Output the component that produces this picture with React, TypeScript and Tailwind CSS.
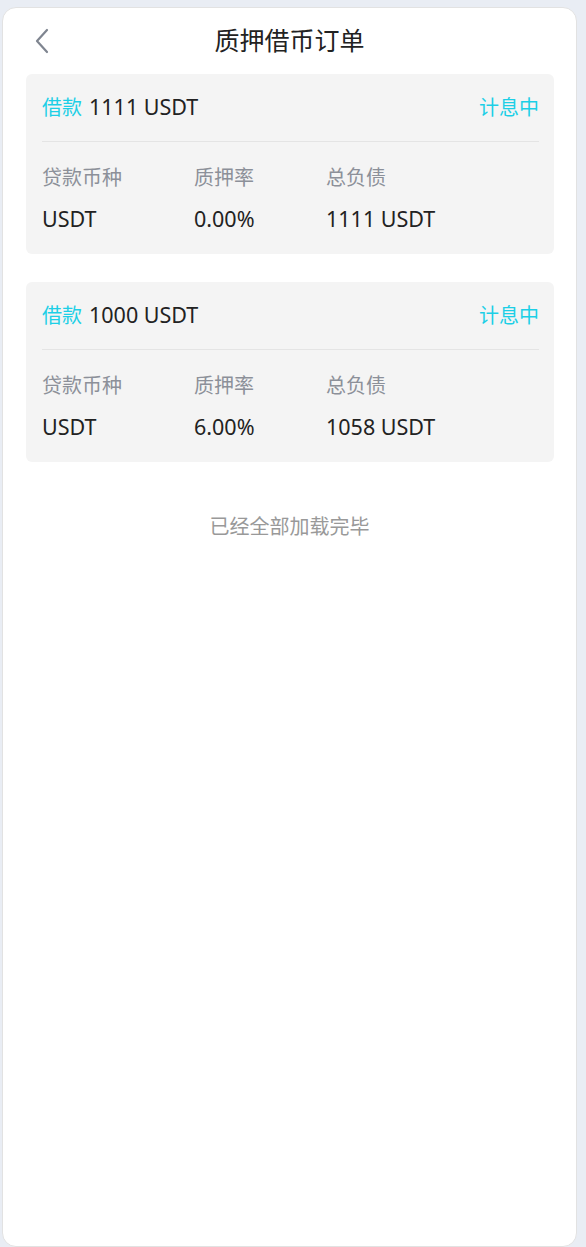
import React from "react";

type Order = {
  amount: string;
  status: string;
  coin: string;
  rate: string;
  debt: string;
};

const orders: Order[] = [
  { amount: "1111 USDT", status: "计息中", coin: "USDT", rate: "0.00%", debt: "1111 USDT" },
  { amount: "1000 USDT", status: "计息中", coin: "USDT", rate: "6.00%", debt: "1058 USDT" },
];

const OrderCard: React.FC<{ order: Order }> = ({ order }) => (
  <div className="rounded-md bg-[#f4f4f4] pl-4 pr-[15px] pb-[21px]">
    <div className="flex h-[68px] items-center justify-between border-b border-[#e4e4e4] text-[20px]">
      <div className="flex items-center gap-[7px]">
        <span className="text-[#1ccfe6]">借款</span>
        <span className="text-[21.5px] text-[#222]">{order.amount}</span>
      </div>
      <span className="text-[#1ccfe6]">{order.status}</span>
    </div>
    <div className="grid grid-cols-[152px_132px_1fr] pt-[22px] text-[20px] leading-[28px]">
      <span className="text-[#8c9099]">贷款币种</span>
      <span className="text-[#8c9099]">质押率</span>
      <span className="text-[#8c9099]">总负债</span>
      <span className="mt-[13px] text-[21.5px] text-[#222]">{order.coin}</span>
      <span className="mt-[13px] text-[21.5px] text-[#222]">{order.rate}</span>
      <span className="mt-[13px] text-[21.5px] text-[#222]">{order.debt}</span>
    </div>
  </div>
);

export default function App() {
  return (
    <div
      className="min-h-[1247px] bg-[#e9edf4] pt-[7px] pl-[2px] pr-[9px]"
      style={{ fontFamily: '"Noto Sans", "Noto Sans CJK SC", sans-serif' }}
    >
      <div className="h-[1240px] rounded-[14px] border border-[#e2e2e2] bg-white">
        {/* 头部 */}
        <div className="relative flex h-[66px] items-center justify-center">
          <svg
            className="absolute left-[29px] top-[20px]"
            width="22"
            height="26"
            viewBox="0 0 22 26"
            fill="none"
            stroke="#7f8590"
            strokeWidth="2.2"
            strokeLinecap="round"
            strokeLinejoin="round"
          >
            <path d="M15 2 L5 13 L15 24" />
          </svg>
          <h1 className="text-[25px] text-[#222]">质押借币订单</h1>
        </div>

        <div className="flex flex-col gap-[28px] pl-[23px] pr-[22px]">
          {orders.map((o, i) => (
            <OrderCard key={i} order={o} />
          ))}
        </div>

        <p className="mt-[50px] text-center text-[20px] text-[#999]">已经全部加载完毕</p>
      </div>
    </div>
  );
}
